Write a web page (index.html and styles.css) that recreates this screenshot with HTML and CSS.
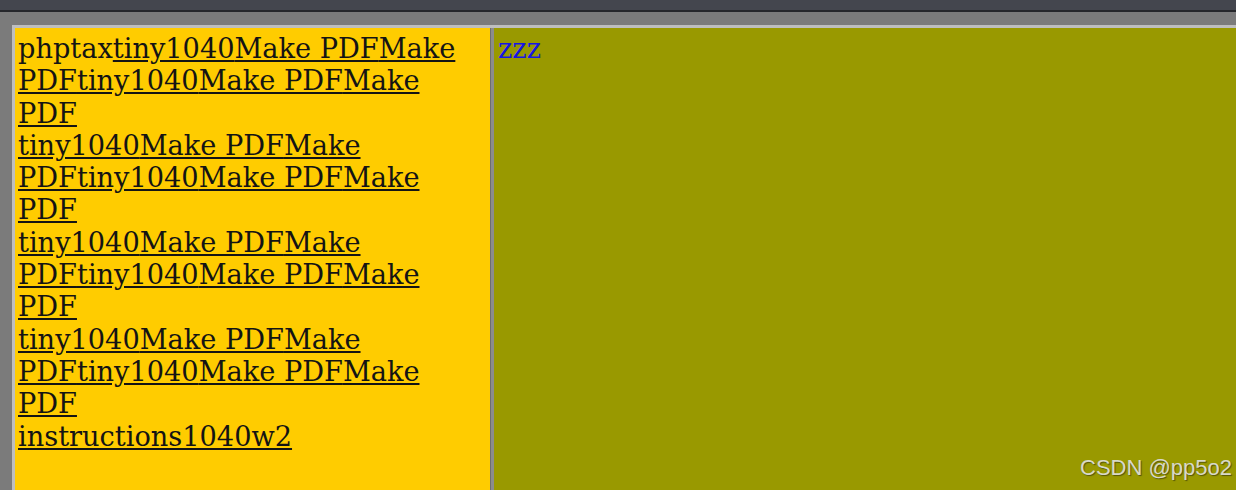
FILE: index.html
```html
<!DOCTYPE html>
<html>
<head>
<meta charset="utf-8">
<link rel="stylesheet" href="styles.css">
</head>
<body>
<div class="topbar"></div>
<div class="shell">
  <div class="frameset">
    <div class="left-frame">phptax<a href="#">tiny1040</a><a href="#">Make PDF</a><a href="#">Make PDF</a><a href="#">tiny1040</a><a href="#">Make PDF</a><a href="#">Make PDF</a><br><a href="#">tiny1040</a><a href="#">Make PDF</a><a href="#">Make PDF</a><a href="#">tiny1040</a><a href="#">Make PDF</a><a href="#">Make PDF</a><br><a href="#">tiny1040</a><a href="#">Make PDF</a><a href="#">Make PDF</a><a href="#">tiny1040</a><a href="#">Make PDF</a><a href="#">Make PDF</a><br><a href="#">tiny1040</a><a href="#">Make PDF</a><a href="#">Make PDF</a><a href="#">tiny1040</a><a href="#">Make PDF</a><a href="#">Make PDF</a><br><a href="#">instructions1040w2</a></div>
    <div class="right-frame"><span class="zzz">zzz</span></div>
  </div>
  <div class="watermark">CSDN @pp5o2</div>
</div>
</body>
</html>
```
FILE: styles.css
```css
html, body {
  margin: 0;
  padding: 0;
  height: 100%;
  overflow: hidden;
}
body {
  background: #7b7b7b;
  display: flex;
  flex-direction: column;
}
.topbar {
  height: 10px;
  background: #44464e;
  border-bottom: 2px solid #26272b;
  flex: none;
}
.shell {
  flex: 1;
  background: #7b7b7b;
  padding: 13px 0 0 12px;
  display: flex;
  position: relative;
  min-height: 0;
}
.frameset {
  flex: 1;
  display: flex;
  border-top: 3px solid #bebebe;
  border-left: 3px solid #bebebe;
  min-height: 0;
}
.left-frame {
  width: 457px;
  flex: none;
  background: #ffcc00;
  padding: 5px 16px 4px 3px;
  font-family: "DejaVu Serif", serif;
  font-size: 27.2px;
  line-height: 32.3px;
  color: #141414;
  border-right: 3px solid #8c8c8c;
  box-shadow: inset -1px 0 0 #6e6e6e;
}
.left-frame a {
  color: #141414;
  text-decoration: underline;
}
.right-frame {
  flex: 1;
  background: #999900;
  padding: 5px 4px 4px;
  font-family: "DejaVu Serif", serif;
  font-size: 27.2px;
  line-height: 32.3px;
}
.zzz {
  color: #1515e6;
}
.watermark {
  position: absolute;
  right: 4px;
  bottom: 9px;
  font-family: "Liberation Sans", Arial, sans-serif;
  font-size: 22px;
  color: #d8d8c8;
  text-shadow: 1px 1px 1px #55550a;
}
```
